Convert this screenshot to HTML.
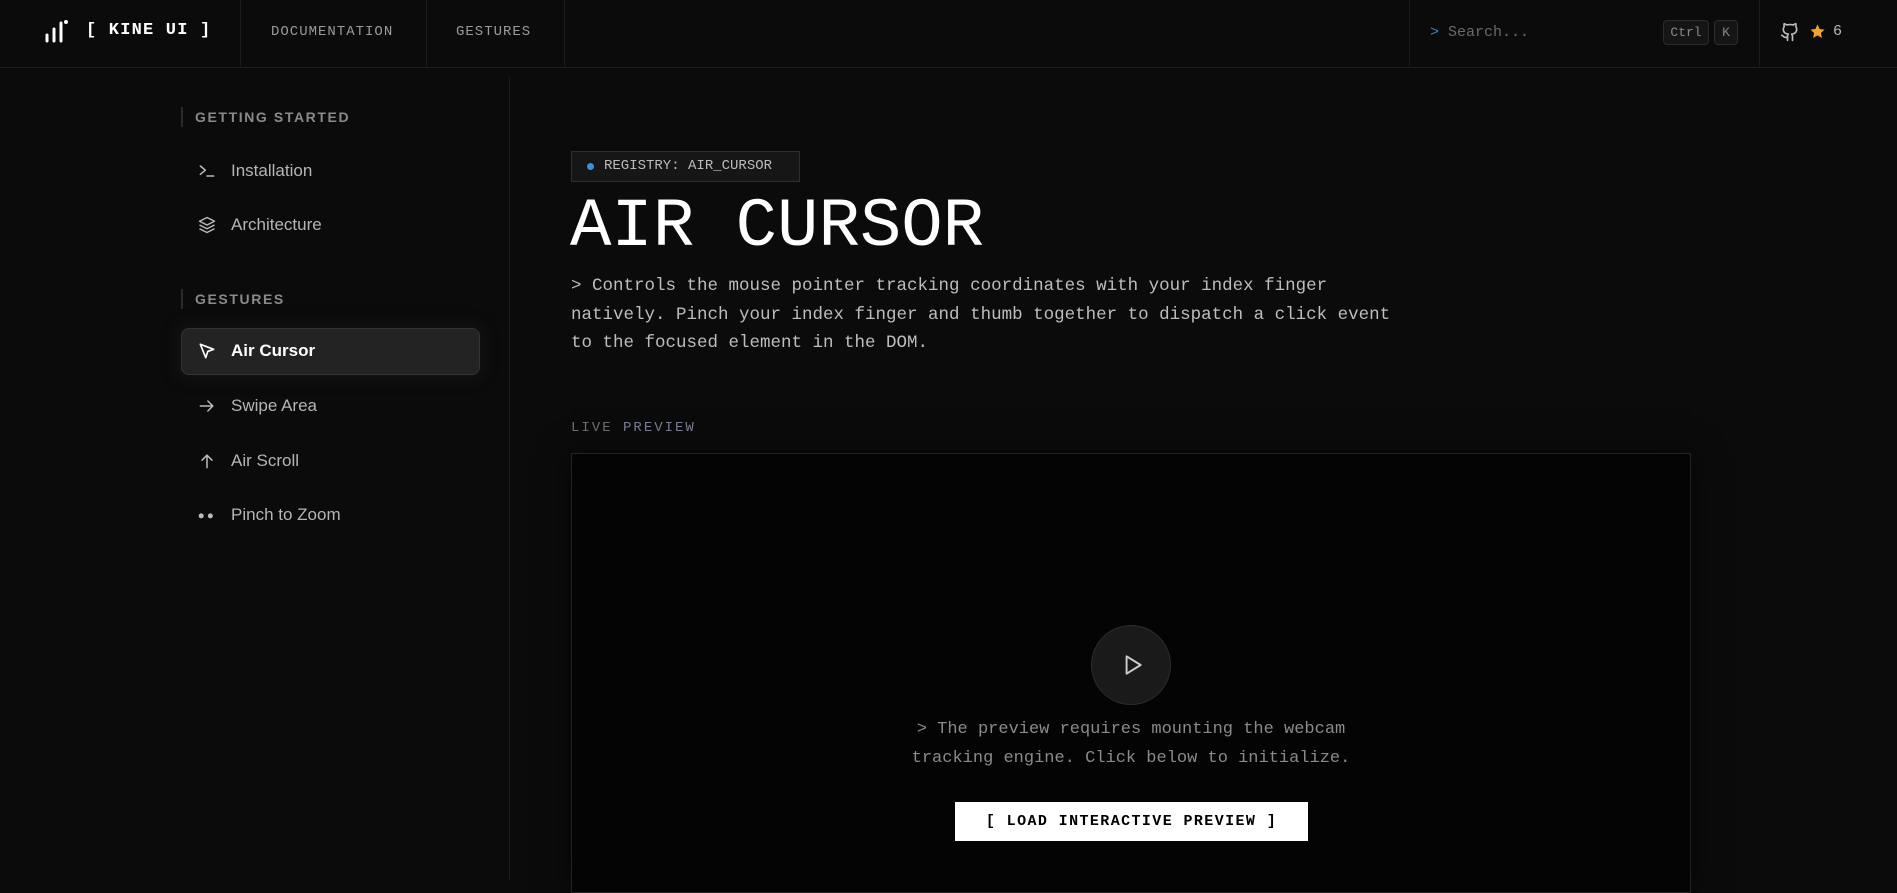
<!DOCTYPE html>
<html><head><meta charset="utf-8"><style>
*{margin:0;padding:0;box-sizing:border-box}
body{width:1897px;height:881px;overflow:hidden;background:#0b0b0b;color:#ddd;font-family:"Liberation Sans",sans-serif;position:relative}
.mono{font-family:"Liberation Mono",monospace}
.abs{position:absolute}
.hdr{position:absolute;left:0;top:0;width:1897px;height:68px;border-bottom:1px solid #1e1e1e}
.vl{position:absolute;top:0;width:1px;height:68px;background:#1c1c1c}
.nav{position:absolute;top:24px;font-family:"Liberation Mono",monospace;font-size:14px;color:#9a9a9a;letter-spacing:1px}
.sec{position:absolute;left:181px;padding-left:12px;border-left:2px solid #2a2a2a;font-size:14px;font-weight:bold;letter-spacing:1.6px;color:#8a8a8a;height:20px;line-height:20px}
.item{position:absolute;left:231px;font-size:17px;color:#b5b5b5;line-height:20px}
.ico{position:absolute;left:197px;width:20px;height:20px}
</style></head><body>
<div class="hdr"></div>
<svg class="abs" style="left:44px;top:18px" width="24" height="26" viewBox="0 0 24 26"><g stroke="#fff" stroke-width="3" stroke-linecap="round"><line x1="3" y1="17" x2="3" y2="23"/><line x1="10" y1="11" x2="10" y2="23"/><line x1="17" y1="5" x2="17" y2="23"/></g><circle cx="22" cy="4" r="2" fill="#fff"/></svg>
<div class="abs mono" style="left:86px;top:21px;font-size:17px;font-weight:bold;color:#fff;letter-spacing:1.2px">[ KINE UI ]</div>
<div class="vl" style="left:240px"></div>
<div class="nav" style="left:271px">DOCUMENTATION</div>
<div class="vl" style="left:426px"></div>
<div class="nav" style="left:456px">GESTURES</div>
<div class="vl" style="left:564px"></div>
<div class="vl" style="left:1409px"></div>
<div class="abs mono" style="left:1430px;top:24px;font-size:15px;color:#6a6a6a"><span style="color:#3b82c4">&gt;</span> Search...</div>
<div class="abs mono" style="left:1663px;top:20px;width:46px;height:25px;border:1px solid #2c2c2c;border-radius:4px;background:#151515;font-size:13px;color:#888;text-align:center;line-height:23px">Ctrl</div>
<div class="abs mono" style="left:1714px;top:20px;width:24px;height:25px;border:1px solid #2c2c2c;border-radius:4px;background:#151515;font-size:13px;color:#888;text-align:center;line-height:23px">K</div>
<div class="vl" style="left:1759px"></div>
<svg class="abs" style="left:1780px;top:22px" width="20" height="20" viewBox="0 0 24 24" fill="none" stroke="#bbb" stroke-width="2" stroke-linecap="round" stroke-linejoin="round"><path d="M15 22v-4a4.8 4.8 0 0 0-1-3.5c3 0 6-2 6-5.5.08-1.25-.27-2.48-1-3.5.28-1.15.28-2.35 0-3.5 0 0-1 0-3 1.5-2.640-.5-5.36-.5-8 0C6 2 5 2 5 2c-.3 1.15-.3 2.35 0 3.5A5.4 5.4 0 0 0 4 9c0 3.5 3 5.5 6 5.5-.39.49-.68 1.05-.85 1.65-.17.6-.22 1.23-.15 1.850v4"/><path d="M9 18c-4.51 2-5-2-7-2"/></svg>
<svg class="abs" style="left:1809px;top:23px" width="17" height="17" viewBox="0 0 24 24"><path d="M12 2l3 6.5 7 .8-5.2 4.8 1.5 7L12 17.5 5.7 21.1l1.5-7L2 9.3l7-.8z" fill="#f0a42c"/></svg>
<div class="abs mono" style="left:1833px;top:23px;font-size:15px;color:#bbb">6</div>

<div class="abs" style="left:509px;top:77px;width:1px;height:804px;background:#1c1c1c"></div>
<div class="sec" style="top:107px">GETTING STARTED</div>
<svg class="ico" style="top:161px" viewBox="0 0 24 24" fill="none" stroke="#bbb" stroke-width="1.8" stroke-linecap="round" stroke-linejoin="round"><path d="M4 6l6 5-6 5M12 18h8"/></svg>
<div class="item" style="top:161px">Installation</div>
<svg class="ico" style="top:215px" viewBox="0 0 24 24" fill="none" stroke="#bbb" stroke-width="1.7" stroke-linejoin="round"><path d="M12 3l9 4.5-9 4.5-9-4.5z"/><path d="M3 12l9 4.5 9-4.5M3 16.5l9 4.5 9-4.5"/></svg>
<div class="item" style="top:215px">Architecture</div>
<div class="sec" style="top:289px">GESTURES</div>
<div class="abs" style="left:181px;top:328px;width:299px;height:47px;border:1px solid #333;border-radius:8px;background:#232323;box-shadow:0 0 12px 6px rgba(20,20,20,.8)"></div>
<svg class="ico" style="top:341px" viewBox="0 0 24 24" fill="none" stroke="#fff" stroke-width="2" stroke-linejoin="round"><path d="M4 4l16 6-7 2.5L10.5 20z"/></svg>
<div class="item" style="top:341px;color:#fff;font-weight:bold">Air Cursor</div>
<svg class="ico" style="top:396px" viewBox="0 0 24 24" fill="none" stroke="#bbb" stroke-width="1.8" stroke-linecap="round" stroke-linejoin="round"><path d="M4 12h15M13 6l6 6-6 6"/></svg>
<div class="item" style="top:396px">Swipe Area</div>
<svg class="ico" style="top:451px" viewBox="0 0 24 24" fill="none" stroke="#bbb" stroke-width="1.8" stroke-linecap="round" stroke-linejoin="round"><path d="M12 20V5M6 11l6-6 6 6"/></svg>
<div class="item" style="top:451px">Air Scroll</div>
<svg class="ico" style="top:505px" viewBox="0 0 24 24"><circle cx="5" cy="13" r="3" fill="#bbb"/><circle cx="16" cy="13" r="3" fill="#bbb"/></svg>
<div class="item" style="top:505px">Pinch to Zoom</div>

<div class="abs mono" style="left:571px;top:151px;width:229px;height:31px;border:1px solid #2e2e2e;background:#161616;font-size:14px;color:#bbb;line-height:29px;padding-left:32px">REGISTRY: AIR_CURSOR</div>
<div class="abs" style="left:587px;top:163px;width:7px;height:7px;border-radius:50%;background:#3b8fe0"></div>
<div class="abs mono" style="left:570px;top:187px;font-size:69px;color:#fff;line-height:80px">AIR CURSOR</div>
<div class="abs mono" style="left:571px;top:272px;font-size:17.5px;color:#bdbdbd;line-height:28.5px;white-space:pre">&gt; Controls the mouse pointer tracking coordinates with your index finger
natively. Pinch your index finger and thumb together to dispatch a click event
to the focused element in the DOM.</div>
<div class="abs mono" style="left:571px;top:420px;font-size:14px;letter-spacing:2px;color:#707070">LIVE <span style="color:#7a7f92">PREVIEW</span></div>
<div class="abs" style="left:571px;top:453px;width:1120px;height:440px;border:1px solid #222;background:#040404;box-shadow:0 0 30px rgba(0,0,0,.6)"></div>
<div class="abs" style="left:1091px;top:625px;width:80px;height:80px;border-radius:50%;border:1px solid #2c2c2c;background:#1a1a1a"></div>
<svg class="abs" style="left:1119px;top:652px" width="26" height="26" viewBox="0 0 24 24" fill="none" stroke="#ccc" stroke-width="1.8" stroke-linejoin="round"><path d="M7 4l13 8-13 8z"/></svg>
<div class="abs mono" style="left:831px;top:715px;width:600px;text-align:center;font-size:17px;color:#8a8a8a;line-height:29px">&gt; The preview requires mounting the webcam<br>tracking engine. Click below to initialize.</div>
<div class="abs mono" style="left:955px;top:802px;width:353px;height:39px;background:#fff;color:#000;font-weight:bold;font-size:15px;letter-spacing:1.4px;text-align:center;line-height:39px">[ LOAD INTERACTIVE PREVIEW ]</div>
</body></html>
